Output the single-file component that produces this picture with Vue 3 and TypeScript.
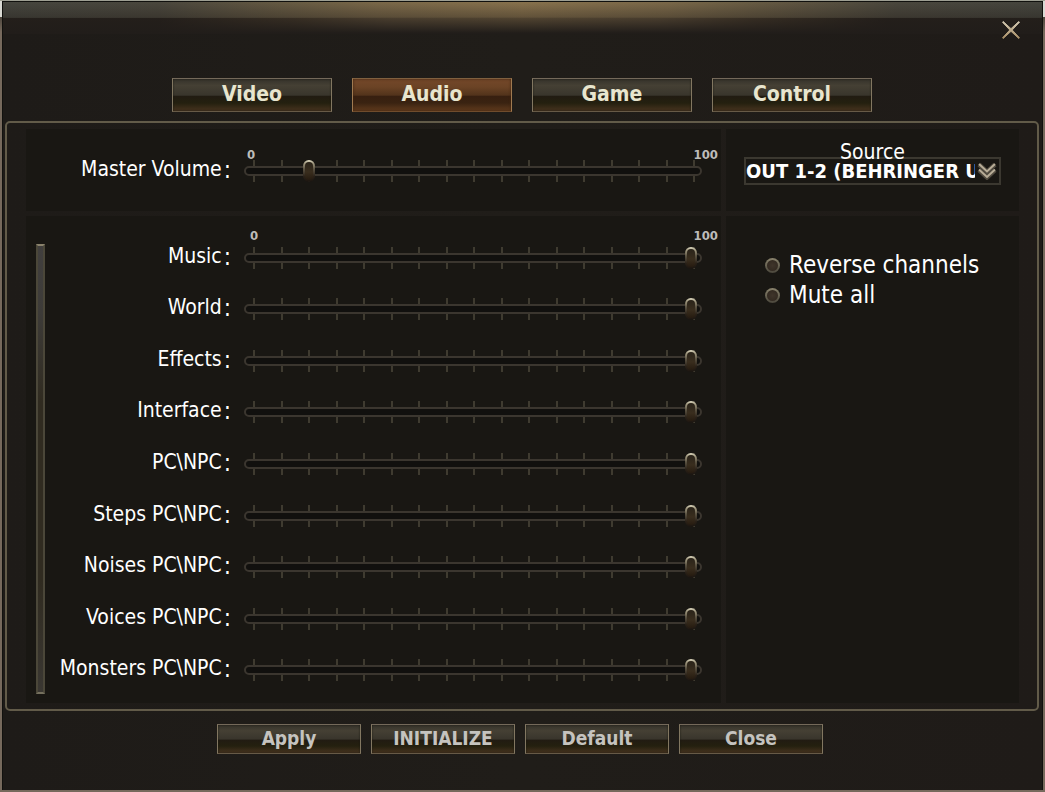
<script setup lang="ts">
import { ref } from 'vue'

interface Channel {
  id: string
  label: string
  value: number
}

const tabs = ['Video', 'Audio', 'Game', 'Control']
const activeTab = ref('Audio')
const actions = ['Apply', 'INITIALIZE', 'Default', 'Close']

const master = ref<Channel>({ id: 'master', label: 'Master Volume', value: 12.5 })
const channels = ref<Channel[]>([
  { id: 'music', label: 'Music', value: 100 },
  { id: 'world', label: 'World', value: 100 },
  { id: 'effects', label: 'Effects', value: 100 },
  { id: 'interface', label: 'Interface', value: 100 },
  { id: 'characters', label: 'PC\\NPC', value: 100 },
  { id: 'steps', label: 'Steps PC\\NPC', value: 100 },
  { id: 'noises', label: 'Noises PC\\NPC', value: 100 },
  { id: 'voices', label: 'Voices PC\\NPC', value: 100 },
  { id: 'monsters', label: 'Monsters PC\\NPC', value: 100 },
])

const source = ref('OUT 1-2 (BEHRINGER U')
const reverseChannels = ref(false)
const muteAll = ref(false)
</script>

<template>
  <div class="backdrop">
    <main class="window">
      <header class="titlebar">
        <button class="close" type="button" aria-label="Close window">
          <svg viewBox="0 0 18 18" width="18" height="18" aria-hidden="true">
            <defs>
              <linearGradient id="cross" x1="0" y1="0" x2="0" y2="1">
                <stop offset="0" stop-color="#d2c8b2" />
                <stop offset="1" stop-color="#a98f66" />
              </linearGradient>
            </defs>
            <path d="M.5 1.2 1.2.5 9 7.7 16.8.5l.7.7L10.2 9l7.3 7.8-.7.7L9 10.3 1.2 17.5l-.7-.7L7.8 9z" fill="url(#cross)" stroke="url(#cross)" stroke-width="1" />
          </svg>
        </button>
      </header>

      <nav class="tabs">
        <button
          v-for="tab in tabs"
          :key="tab"
          type="button"
          class="plate tab"
          :class="{ active: tab === activeTab }"
          @click="activeTab = tab"
        >{{ tab }}</button>
      </nav>

      <section class="frame">
        <div class="panel master">
          <div class="row">
            <label class="name" :for="master.id">{{ master.label }}<span class="colon">:</span></label>
            <div class="slider">
              <span class="scale low">0</span>
              <span class="scale high">100</span>
              <div class="ticks"><i v-for="n in 17" :key="n"></i></div>
              <div class="track"></div>
              <input :id="master.id" v-model.number="master.value" type="range" min="0" max="100" step="0.5" />
            </div>
          </div>
        </div>

        <div class="panel source">
          <label class="source-name" for="source">Source</label>
          <div class="picker">
            <select id="source" v-model="source">
              <option>OUT 1-2 (BEHRINGER U</option>
            </select>
            <svg class="chevrons" viewBox="0 0 20 18" width="20" height="18" aria-hidden="true">
              <path d="M2 2.500 10 10l8-7.500M2 8l8 7.500L18 8" fill="none" stroke="#504a3f" stroke-width="4.500" />
              <path d="M2 2 10 9.500 18 2M2 7.500 10 15l8-7.500" fill="none" stroke="#b8ad97" stroke-width="2" />
            </svg>
          </div>
        </div>

        <div class="panel mixer">
          <div class="rail"></div>
          <div v-for="(channel, index) in channels" :key="channel.id" class="row">
            <label class="name" :for="channel.id">{{ channel.label }}<span class="colon">:</span></label>
            <div class="slider">
              <template v-if="index === 0">
                <span class="scale low">0</span>
                <span class="scale high">100</span>
              </template>
              <div class="ticks"><i v-for="n in 17" :key="n"></i></div>
              <div class="track"></div>
              <input :id="channel.id" v-model.number="channel.value" type="range" min="0" max="100" step="0.5" />
            </div>
          </div>
        </div>

        <div class="panel options">
          <label class="option"><input v-model="reverseChannels" type="checkbox" />Reverse channels</label>
          <label class="option"><input v-model="muteAll" type="checkbox" />Mute all</label>
        </div>
      </section>

      <footer class="actions">
        <button v-for="action in actions" :key="action" type="button" class="plate action">{{ action }}</button>
      </footer>
    </main>
  </div>
</template>

<style>
body {
  background: #1f1c19;
}
</style>

<style scoped>
* {
  box-sizing: border-box;
}

.backdrop {
  display: flex;
  min-height: 100vh;
  padding: 1px 2px 2px;
  background: linear-gradient(#9d9e92 0 1px, #d9d9d3 1px 17px, #4e463d 17px, #76695c 32px);
  font-family: 'DejaVu Sans Condensed', 'Noto Sans', 'Open Sans', sans-serif;
  color: #fff;
}

.window {
  flex: 1;
  display: flex;
  flex-direction: column;
  min-width: 0;
  padding: 0 3px 36px 2px;
  border: 1px solid #11110e;
  border-width: 1px 1px 0;
  background:
    linear-gradient(#231e1a00, #231e1a60 15px, #231e1a80 16px, #211d1a 31px) 0 0 / 100% 32px no-repeat,
    linear-gradient(90deg, #45453e, #4a473d 15%, #665a43 27%, #7a6849 36%, #88724d 50%, #7a6849 64%, #665a43 73%, #4a473d 86%, #45453e) 0 0 / 100% 16px no-repeat,
    linear-gradient(90deg, #241f1b 15%, #4a3d2c 28%, #6e5c42 37%, #7e6947 50%, #6e5c42 63%, #4a3d2c 72%, #241f1b 85%) 0 0 / 100% 32px no-repeat,
    linear-gradient(90deg, #1e1b18, #201d19 50%, #1f1b18);
}

.titlebar {
  display: flex;
  justify-content: flex-end;
  height: 76px;
  padding: 17px 17px 0 0;
}

.close {
  display: flex;
  width: 22px;
  height: 22px;
  padding: 2px;
  border: 0;
  background: none;
}

.tabs {
  display: flex;
  justify-content: center;
  gap: 20px;
  margin-bottom: 9px;
}

.plate {
  padding: 0;
  border: 1px solid;
  border-color: #74695a #827761 #675a47;
  font-family: inherit;
  font-weight: bold;
  background: linear-gradient(#34312a, #454034 20%, #39352c 51%, #211b12 53%, #24200f 75%, #47331f);
  box-shadow: inset 0 0 2px #1a1710;
}

.tab {
  width: 160px;
  height: 34px;
  padding-bottom: 3px;
  font-size: 21px;
  line-height: 26px;
  color: #e8e5ce;
}

.tab.active {
  border-color: #80603f #a07a50 #704c2c;
  background: linear-gradient(#74482a, #6b4325 25%, #52331b 51%, #371f10 53%, #3a2311 75%, #613b1d);
  box-shadow: inset 0 0 3px #40240f;
}

.frame {
  flex: 1;
  display: grid;
  grid-template-columns: minmax(0, 695fr) minmax(0, 293fr);
  grid-template-rows: 82px 1fr;
  gap: 5px;
  padding: 6px 18px 6px 19px;
  border: 2px solid #625b49;
  border-radius: 5px;
}

.panel {
  background: #191713;
}

.master {
  padding: 16px 19px 14px 0;
}

.mixer {
  position: relative;
  display: flex;
  flex-direction: column;
  padding: 16px 19px 7px 0;
}

.row {
  flex: 1;
  display: flex;
  align-items: center;
  gap: 13px;
  min-height: 51px;
}

.name {
  display: flex;
  justify-content: flex-end;
  align-items: center;
  gap: 2px;
  width: 205px;
  padding-bottom: 4px;
  font-size: 21px;
  line-height: 26px;
  white-space: nowrap;
}

.colon {
  padding-top: 2px;
  font-size: 24px;
  line-height: 26px;
}

.slider {
  position: relative;
  flex: 1;
  display: grid;
  align-items: center;
  height: 22px;
}

.slider > .ticks,
.slider > .track,
.slider > input {
  grid-area: 1 / 1;
}

.ticks {
  display: flex;
  justify-content: space-between;
  height: 22px;
  margin: 0 7px 0 9px;
}

.ticks i {
  width: 2px;
  background: #3f3b30;
}

.track {
  height: 10px;
  border: 2px solid #3b362f;
  border-radius: 5px;
  background: #11100e;
}

.slider input {
  z-index: 1;
  width: auto;
  height: 22px;
  margin: 0 5px 0 4px;
  appearance: none;
  background: none;
}

.slider input::-webkit-slider-thumb {
  appearance: none;
  width: 12px;
  height: 22px;
  border: 2px solid transparent;
  border-radius: 6px;
  background:
    linear-gradient(#292319, #3a2e1e 55%, #261b10) padding-box,
    linear-gradient(#e4dfc6, #a39b82 14%, #5c5443 40%, #2a2118 75%, #1b1510) border-box;
}

.scale {
  position: absolute;
  top: -13px;
  font-size: 13px;
  font-weight: bold;
  line-height: 16px;
  color: #bdbcb9;
}

.low {
  left: 3px;
}

.high {
  right: -16px;
}

.mixer .scale {
  top: -19px;
}

.mixer .low {
  left: 6px;
}

.rail {
  position: absolute;
  top: 28px;
  bottom: 9px;
  left: 10px;
  width: 9px;
  border: 2px solid #4b4739;
  border-color: #8a826c #4b4739 #75705e;
  background: linear-gradient(#413f3e, #3d3b38 15%, #302b20 35%, #302b20 75%, #3a3732);
}

.source {
  display: flex;
  flex-direction: column;
  padding: 10px 18px 0;
}

.source-name {
  z-index: 1;
  height: 18px;
  font-size: 21px;
  line-height: 26px;
  text-align: center;
}

.picker {
  position: relative;
  display: flex;
}

.picker select {
  width: 100%;
  height: 28px;
  padding: 0 24px 0 0;
  border: 2px solid #3b3830;
  border-radius: 0;
  appearance: none;
  background: none;
  font-family: inherit;
  font-size: 20px;
  font-weight: bold;
  line-height: 24px;
  color: #fff;
}

.chevrons {
  position: absolute;
  top: 5px;
  right: 4px;
  pointer-events: none;
}

.options {
  padding: 34px 10px 0 39px;
}

.option {
  display: flex;
  align-items: center;
  gap: 9px;
  height: 30px;
  font-size: 24px;
  line-height: 30px;
  white-space: nowrap;
}

.option input {
  width: 15px;
  height: 15px;
  margin: 0;
  border: 2px solid transparent;
  border-radius: 50%;
  appearance: none;
  background:
    radial-gradient(#40352b, #2e261e) padding-box,
    linear-gradient(#8a836d, #4a463b) border-box;
}

.option input:checked {
  background: radial-gradient(#d8c89b 25%, #2e261e 60%);
}

.actions {
  display: flex;
  justify-content: center;
  gap: 10px;
  margin-top: 13px;
  padding-right: 4px;
}

.action {
  width: 144px;
  height: 30px;
  padding-bottom: 3px;
  font-size: 19px;
  line-height: 24px;
  color: #c5c3bf;
}
</style>
